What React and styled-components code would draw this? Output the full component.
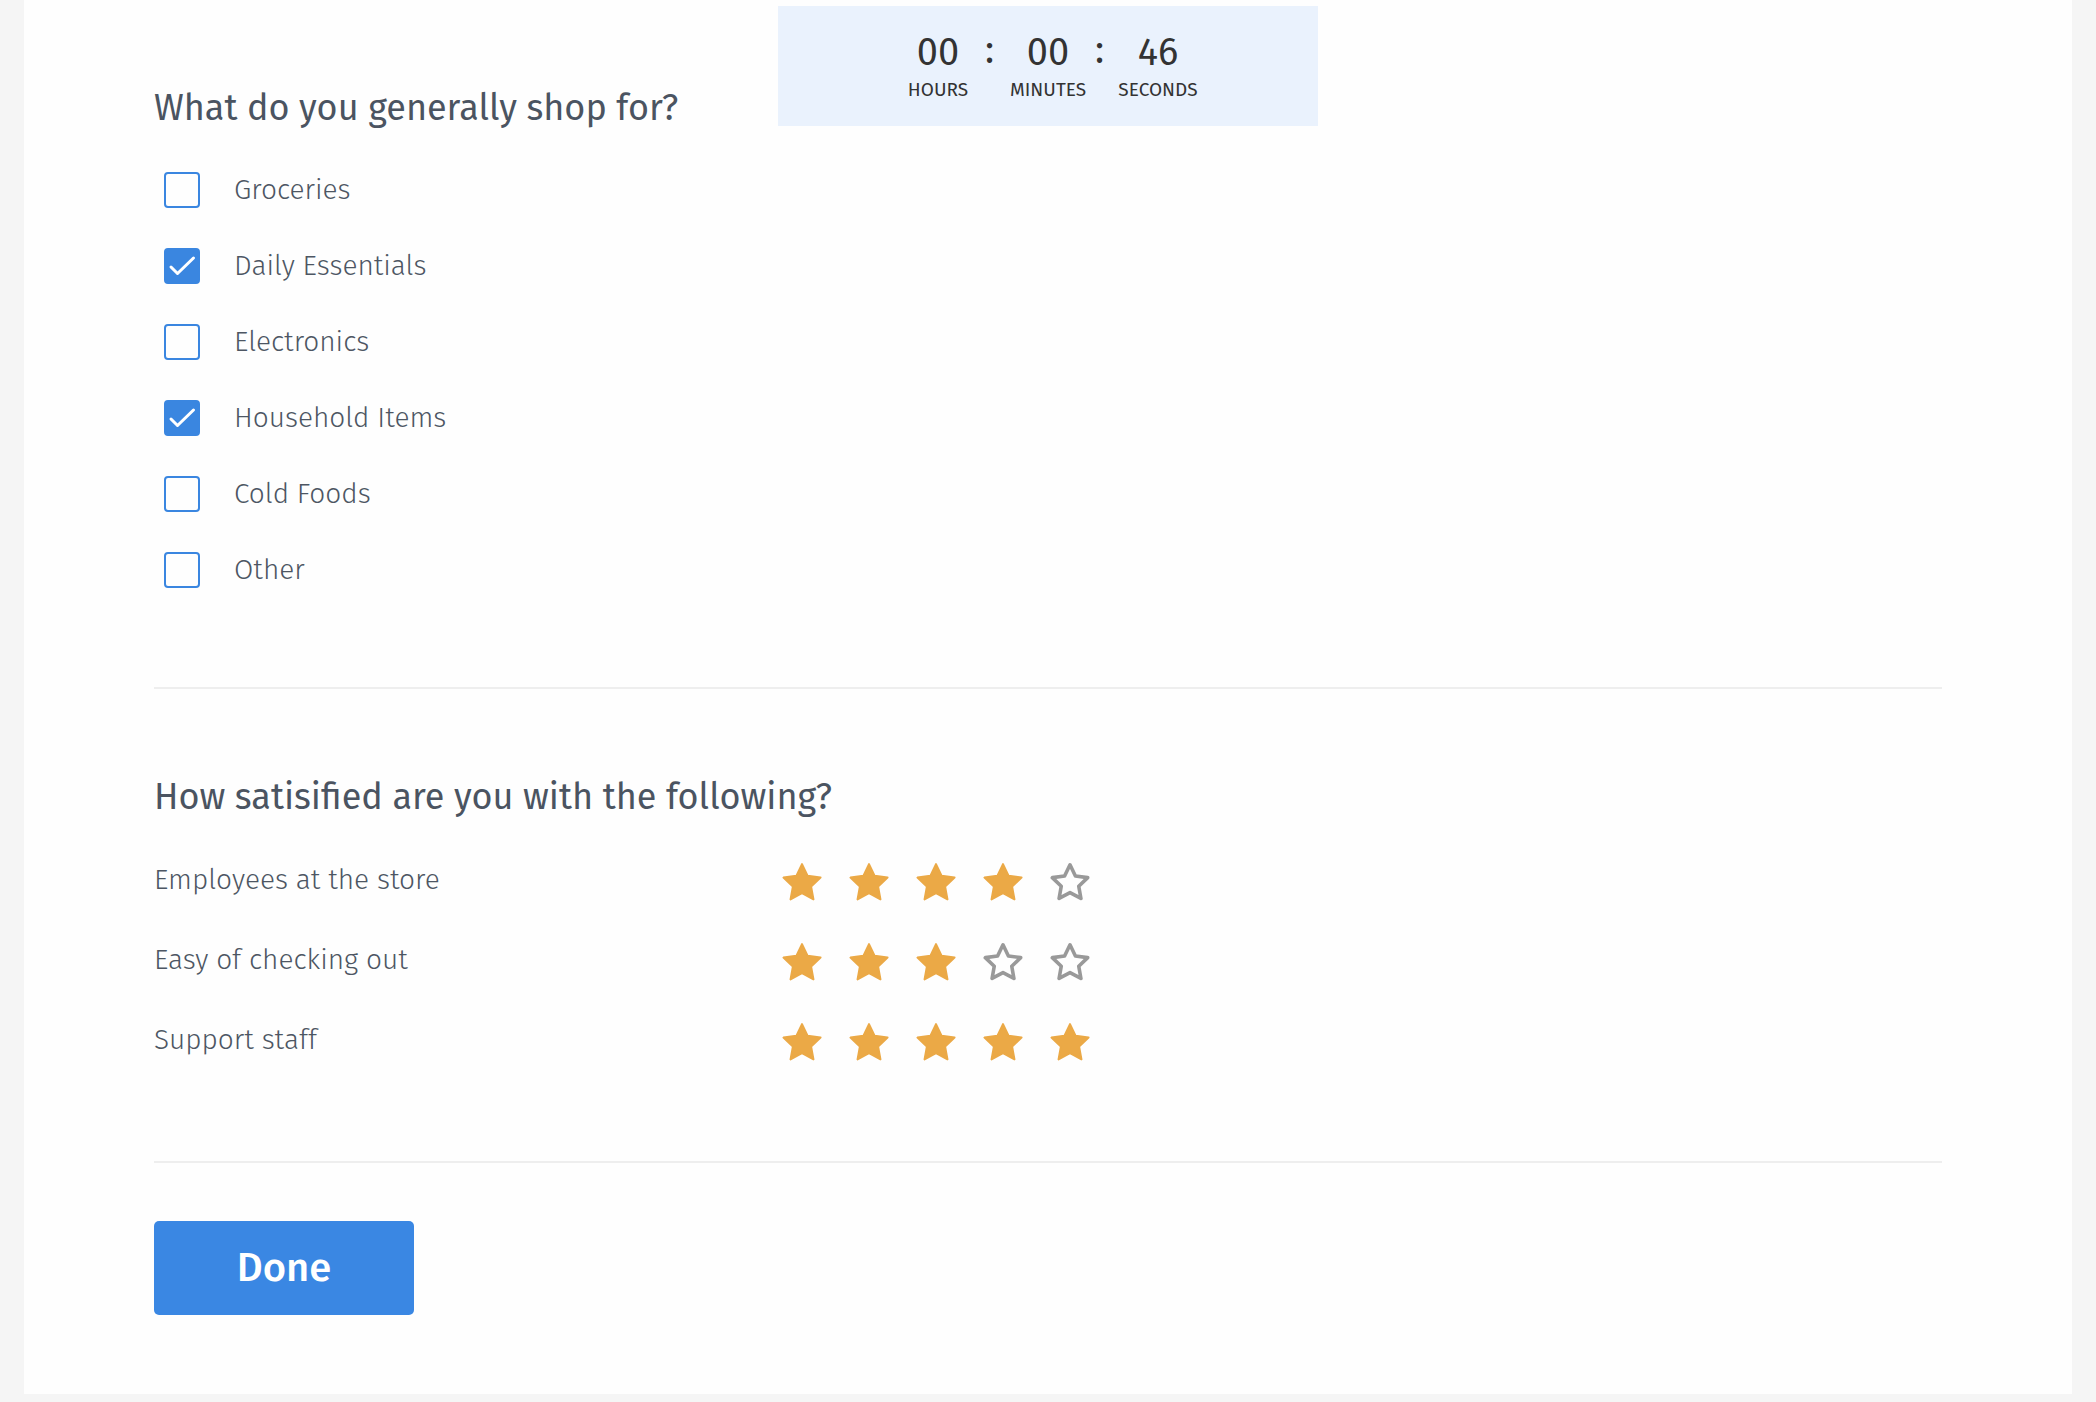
import React from "react";
import styled, { createGlobalStyle } from "styled-components";

const GlobalStyle = createGlobalStyle`
  html, body {
    margin: 0;
    padding: 0;
    background: #f5f5f5;
  }
  body {
    font-family: "Fira Sans", "Open Sans", "Liberation Sans", sans-serif;
    color: #4b5461;
  }
  * { box-sizing: border-box; }
`;

const Page = styled.div`
  padding: 0 24px 7px;
`;

const Panel = styled.main`
  background: #fefefe;
  padding: 88px 130px 79px;
`;

const Heading = styled.h2`
  margin: 0;
  font-size: 36px;
  line-height: 40px;
  font-weight: 400;
  color: #4b5461;
`;

const CheckList = styled.div`
  display: flex;
  flex-direction: column;
  gap: 40px;
  margin-top: ${(p) => p.$top}px;
`;

const CheckRow = styled.label`
  display: flex;
  align-items: center;
  gap: 34px;
  padding-left: 10px;
  height: 36px;
  cursor: pointer;
`;

const Box = styled.span`
  width: 36px;
  height: 36px;
  border-radius: 4px;
  border: 2px solid #3a86e0;
  background: ${(p) => (p.$checked ? "#3a86e0" : "transparent")};
  display: flex;
  align-items: center;
  justify-content: center;
  flex: none;
`;

const Label = styled.span`
  font-size: 28px;
  font-weight: 300;
  color: #4d5663;
  line-height: 36px;
`;

const Divider = styled.hr`
  border: 0;
  height: 2px;
  background: #eeeeee;
  margin: ${(p) => p.$top}px 0 ${(p) => p.$bottom}px;
`;

const RatingGrid = styled.div`
  display: grid;
  grid-template-columns: 628px auto;
  row-gap: 40px;
  margin-top: 42px;
`;

const RatingLabel = styled.div`
  display: flex;
  align-items: center;
  height: 40px;
  font-size: 28px;
  font-weight: 300;
  color: #4d5663;
`;

const Stars = styled.div`
  display: flex;
  gap: 27px;
  height: 40px;
`;

const Button = styled.button`
  width: 260px;
  height: 94px;
  border: 0;
  border-radius: 5px;
  background: #3a87e3;
  color: #ffffff;
  font-family: inherit;
  font-size: 40px;
  font-weight: 500;
  cursor: pointer;
  display: block;
`;

const Timer = styled.div`
  position: fixed;
  top: 6px;
  left: 50%;
  transform: translateX(-50%);
  width: 540px;
  height: 120px;
  background: #eaf2fd;
  display: flex;
  justify-content: center;
  align-items: flex-start;
  padding-top: 22px;
  color: #333333;
`;

const Unit = styled.div`
  width: 90px;
  display: flex;
  flex-direction: column;
  align-items: center;
`;

const Digits = styled.div`
  font-size: 38px;
  line-height: 48px;
  font-weight: 400;
`;

const Colon = styled.div`
  width: 20px;
  padding-left: 2px;
  text-align: left;
  font-size: 38px;
  line-height: 44px;
  font-weight: 400;
`;

const UnitLabel = styled.div`
  font-size: 19px;
  line-height: 24px;
  font-weight: 400;
  text-transform: uppercase;
  margin-top: 2px;
`;

const starPoints = (cx, cy, R, r) => {
  const pts = [];
  for (let i = 0; i < 10; i++) {
    const rad = i % 2 === 0 ? R : r;
    const a = (Math.PI / 5) * i - Math.PI / 2;
    pts.push(`${(cx + rad * Math.cos(a)).toFixed(2)},${(cy + rad * Math.sin(a)).toFixed(2)}`);
  }
  return pts.join(" ");
};

const FILLED = starPoints(20, 24.6, 19.5, 9.6);
const EMPTY = starPoints(20, 24.4, 18.6, 9.2);

const Star = ({ on }) => (
  <svg width="40" height="44" viewBox="0 0 40 44">
    {on ? (
      <polygon points={FILLED} fill="#eba946" stroke="#eba946" strokeWidth="2" strokeLinejoin="round" />
    ) : (
      <polygon points={EMPTY} fill="none" stroke="#999999" strokeWidth="3.6" strokeLinejoin="round" />
    )}
  </svg>
);

const Check = () => (
  <svg width="32" height="32" viewBox="0 0 32 32">
    <polyline points="5,17 11.5,23.5 27.5,8" fill="none" stroke="#ffffff" strokeWidth="3" strokeLinecap="round" strokeLinejoin="round" />
  </svg>
);

const options = [
  ["Groceries", false],
  ["Daily Essentials", true],
  ["Electronics", false],
  ["Household Items", true],
  ["Cold Foods", false],
  ["Other", false],
];

const ratings = [
  ["Employees at the store", 4],
  ["Easy of checking out", 3],
  ["Support staff", 5],
];

export default function App() {
  return (
    <>
      <GlobalStyle />
      <Timer>
        <Unit>
          <Digits>00</Digits>
          <UnitLabel>Hours</UnitLabel>
        </Unit>
        <Colon>:</Colon>
        <Unit>
          <Digits>00</Digits>
          <UnitLabel>Minutes</UnitLabel>
        </Unit>
        <Colon>:</Colon>
        <Unit>
          <Digits>46</Digits>
          <UnitLabel>Seconds</UnitLabel>
        </Unit>
      </Timer>
      <Page>
        <Panel>
          <section>
            <Heading>What do you generally shop for?</Heading>
            <CheckList $top={44}>
              {options.map(([text, checked]) => (
                <CheckRow key={text}>
                  <Box $checked={checked}>{checked && <Check />}</Box>
                  <Label>{text}</Label>
                </CheckRow>
              ))}
            </CheckList>
          </section>
          <Divider $top={99} $bottom={88} />
          <section>
            <Heading>How satisified are you with the following?</Heading>
            <RatingGrid>
              {ratings.map(([text, n]) => (
                <React.Fragment key={text}>
                  <RatingLabel>{text}</RatingLabel>
                  <Stars>
                    {[1, 2, 3, 4, 5].map((i) => (
                      <Star key={i} on={i <= n} />
                    ))}
                  </Stars>
                </React.Fragment>
              ))}
            </RatingGrid>
          </section>
          <Divider $top={102} $bottom={58} />
          <Button>Done</Button>
        </Panel>
      </Page>
    </>
  );
}
